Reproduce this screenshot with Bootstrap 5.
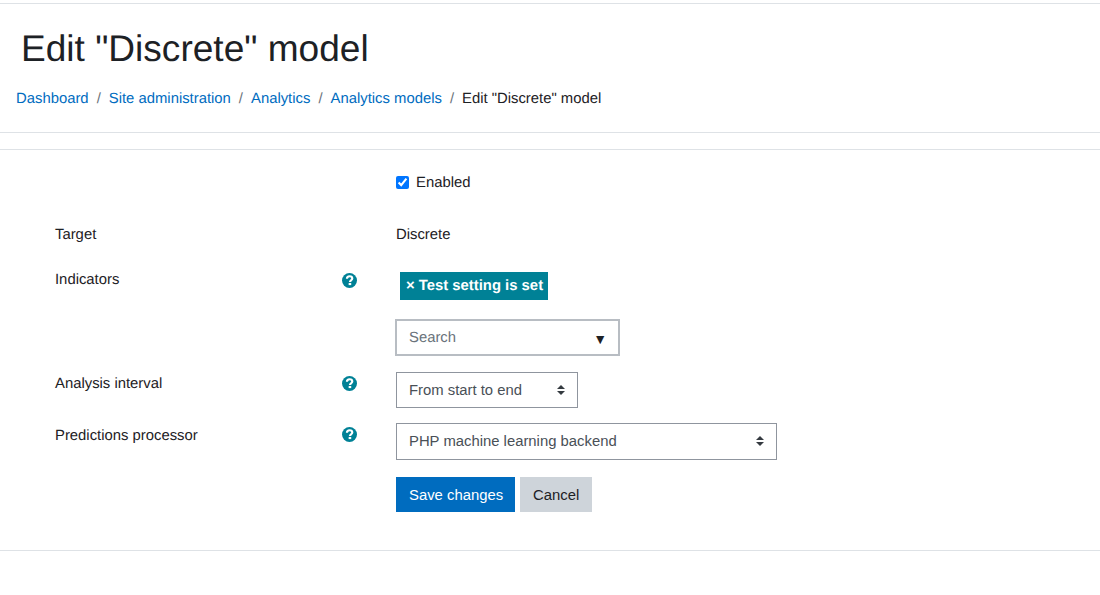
<!DOCTYPE html>
<html lang="en">
<head>
<meta charset="utf-8">
<title>Edit "Discrete" model</title>
<link rel="stylesheet" href="https://cdn.jsdelivr.net/npm/bootstrap@5.3.0/dist/css/bootstrap.min.css">
<style>
html,body{height:595px;overflow:hidden}
body{font-family:"Liberation Sans",Arial,sans-serif;font-size:14.85px;line-height:22.5px;color:#1d2125;background:#fff;text-rendering:geometricPrecision}
a{color:#006cbf;text-decoration:none}
.page-top{margin-top:3px;border-top:1px solid #dee2e6;height:130px;border-bottom:1px solid #dee2e6;padding:0 16px}
.page-title{font-size:37.07px;line-height:45px;font-weight:400;margin:0;padding:22px 0 0 5px;color:#1d2125}
.crumbs{margin:0;padding:0;font-size:14.85px;line-height:22.5px;margin-top:17px;--bs-breadcrumb-divider:"/";--bs-breadcrumb-item-padding-x:8px;--bs-breadcrumb-divider-color:#6a737b;--bs-breadcrumb-margin-bottom:0}
.crumbs .breadcrumb-item.active{color:#1d2125}
.form-zone{margin-top:16px;border-top:1px solid #dee2e6;border-bottom:1px solid #dee2e6;height:402px;padding:0 0 0 55px}
.frow{display:flex}
.flabel{width:287px;flex:none}
.row-interval .flabel{padding-top:1px}
.row-proc .flabel{padding-top:2px}
.fhelp{width:54px;flex:none;color:#008196;display:flex;align-items:flex-start}
.fhelp svg{margin-top:4px;width:15px;height:15px;display:block}
.fcontrol{flex:1}
.check-wrap{display:flex;align-items:center;padding-top:22px;height:45px;gap:7px}
.check-native{width:13px;height:13px;margin:0 0 2px;flex:none}
.row-target{margin-top:29px}
.row-ind{margin-top:22px}
.tag-pill{display:inline-block;background:#008196;color:#fff;font-weight:700;font-size:14.85px;line-height:17px;padding:6px 5px 4px 6px;margin:3px 0 0 4px;height:28px}
.pick{width:225px;height:37px;border:2px solid #b8bdc3;display:flex;align-items:center;justify-content:space-between;padding:3px 11px 0 12px;margin:19px 0 0 -1px;color:#6a737b;background:#fff}
.pick-caret{color:#1d2125;font-size:14px;line-height:1}
.sel{border:1px solid #8f959e;border-radius:0;height:36px;font-size:14.85px;line-height:22.5px;color:#495057;padding:1px 32px 0 12px;background-size:auto;background-position:right 12px center;background-image:url("data:image/svg+xml,%3Csvg xmlns='http://www.w3.org/2000/svg' width='8' height='10' viewBox='0 0 8 10'%3E%3Cpath fill='%23343a40' d='M4 0l4 4H0zM4 10L0 6h8z'/%3E%3C/svg%3E")}
.sel-a{width:182px}
.sel-b{width:381px;height:37px}
.row-interval{margin-top:16px}
.row-proc{margin-top:15px}
.btn-row{display:flex;gap:5px;margin-top:17px}
.btn-save{background:#006cbf;border:1px solid #006cbf;color:#fff;border-radius:0;font-size:14.85px;line-height:22.5px;padding:6px 11px 4px 12px;height:35px}
.btn-cancel{background:#ced4da;border:1px solid #ced4da;color:#1d2125;border-radius:0;font-size:14.85px;line-height:22.5px;padding:6px 12px 4px;height:35px}
</style>
</head>
<body>
<header class="page-top">
  <h1 class="page-title">Edit "Discrete" model</h1>
  <nav aria-label="breadcrumb">
    <ol class="breadcrumb crumbs">
      <li class="breadcrumb-item"><a href="#">Dashboard</a></li>
      <li class="breadcrumb-item"><a href="#">Site administration</a></li>
      <li class="breadcrumb-item"><a href="#">Analytics</a></li>
      <li class="breadcrumb-item"><a href="#">Analytics models</a></li>
      <li class="breadcrumb-item active" aria-current="page">Edit "Discrete" model</li>
    </ol>
  </nav>
</header>
<form class="form-zone">
  <div class="frow">
    <div class="flabel"></div><div class="fhelp"></div>
    <div class="fcontrol">
      <label class="check-wrap"><input class="check-native" type="checkbox" checked><span>Enabled</span></label>
    </div>
  </div>
  <div class="frow row-target">
    <div class="flabel">Target</div><div class="fhelp"></div>
    <div class="fcontrol">Discrete</div>
  </div>
  <div class="frow row-ind">
    <div class="flabel">Indicators</div>
    <div class="fhelp"><svg viewBox="0 0 14 14"><circle cx="7" cy="7" r="7" fill="#008196"/><path d="M4.6 5.4C4.6 3.9 5.7 3 7.1 3S9.6 3.9 9.6 5.2C9.6 6.8 7.4 6.8 7.4 8.3" fill="none" stroke="#fff" stroke-width="2"/><rect x="6.2" y="9.3" width="2.4" height="2" fill="#fff"/></svg></div>
    <div class="fcontrol">
      <span class="tag-pill">× Test setting is set</span>
      <div class="pick"><span>Search</span><span class="pick-caret">▼</span></div>
    </div>
  </div>
  <div class="frow row-interval">
    <div class="flabel">Analysis interval</div>
    <div class="fhelp"><svg viewBox="0 0 14 14"><circle cx="7" cy="7" r="7" fill="#008196"/><path d="M4.6 5.4C4.6 3.9 5.7 3 7.1 3S9.6 3.9 9.6 5.2C9.6 6.8 7.4 6.8 7.4 8.3" fill="none" stroke="#fff" stroke-width="2"/><rect x="6.2" y="9.3" width="2.4" height="2" fill="#fff"/></svg></div>
    <div class="fcontrol"><select class="form-select sel sel-a"><option>From start to end</option></select></div>
  </div>
  <div class="frow row-proc">
    <div class="flabel">Predictions processor</div>
    <div class="fhelp"><svg viewBox="0 0 14 14"><circle cx="7" cy="7" r="7" fill="#008196"/><path d="M4.6 5.4C4.6 3.9 5.7 3 7.1 3S9.6 3.9 9.6 5.2C9.6 6.8 7.4 6.8 7.4 8.3" fill="none" stroke="#fff" stroke-width="2"/><rect x="6.2" y="9.3" width="2.4" height="2" fill="#fff"/></svg></div>
    <div class="fcontrol"><select class="form-select sel sel-b"><option>PHP machine learning backend</option></select></div>
  </div>
  <div class="frow">
    <div class="flabel"></div><div class="fhelp"></div>
    <div class="fcontrol btn-row"><button type="button" class="btn btn-save">Save changes</button><button type="button" class="btn btn-cancel">Cancel</button></div>
  </div>
</form>
</body>
</html>
